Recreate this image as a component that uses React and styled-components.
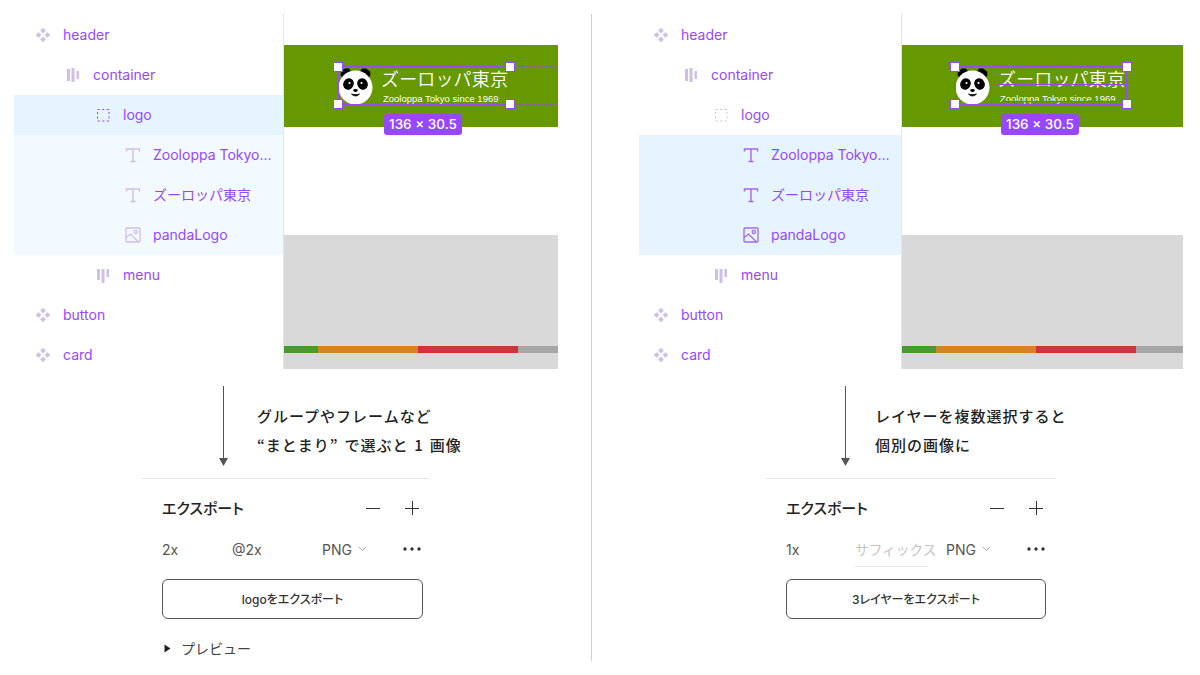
import React from 'react';
import styled, { createGlobalStyle } from 'styled-components';

const PURPLE = '#9747ff';
const ICON_MUTED = '#cfbfe8';
const UI_FONT = 'Inter, "Noto Sans CJK JP", sans-serif';

const GlobalStyle = createGlobalStyle`
  html, body {
    margin: 0;
    height: 100%;
    background: #fff;
    overflow: hidden;
  }
  body {
    font-family: ${UI_FONT};
  }
  * {
    box-sizing: border-box;
  }
`;

// Page
const Page = styled.div`
  display: grid;
  grid-template-columns: 591px 1px 1fr;
  width: 1200px;
  height: 675px;
`;

const Divider = styled.div`
  margin-top: 14px;
  height: 647px;
  background: #cfcfcf;
`;

const Section = styled.section`
  display: flex;
  flex-direction: column;
  padding-top: 14px;
  padding-left: ${(p) => p.$left}px;
`;

const Editor = styled.div`
  display: flex;
  height: 355px;
`;

// Layers
const LayerPanel = styled.div`
  width: ${(p) => p.$width}px;
  padding-top: 1px;
  border-right: 1px solid #e6e6e6;
  overflow: hidden;
`;

const Row = styled.div`
  display: flex;
  align-items: center;
  gap: 12px;
  height: 40px;
  padding-left: ${(p) => p.$inset + p.$depth * 30}px;
  background: ${(p) => (p.$tone === 'selected' ? '#e5f4ff' : p.$tone === 'child' ? '#f2f9ff' : 'transparent')};
  color: ${PURPLE};
  font-size: 14px;
  line-height: 20px;
  white-space: nowrap;
`;

const LayerName = styled.span`
  display: block;
  height: 20px;
  overflow: visible;
`;

const IconBox = styled.svg`
  flex: none;
  width: 16px;
  height: 16px;
  color: ${(p) => (p.$strong ? '#a566f5' : ICON_MUTED)};
`;

const ComponentIcon = () => (
  <IconBox viewBox="0 0 16 16">
    <g fill="currentColor">
      <rect x="6" y="1.6" width="4" height="4" transform="rotate(45 8 3.6)" />
      <rect x="6" y="10.4" width="4" height="4" transform="rotate(45 8 12.4)" />
      <rect x="1.6" y="6" width="4" height="4" transform="rotate(45 3.6 8)" />
      <rect x="10.4" y="6" width="4" height="4" transform="rotate(45 12.4 8)" />
    </g>
  </IconBox>
);

const RowsIcon = () => (
  <IconBox viewBox="0 0 16 16">
    <g fill="currentColor">
      <rect x="2" y="2" width="3" height="12" />
      <rect x="6.5" y="1" width="3" height="14" />
      <rect x="11.5" y="4" width="2.5" height="8" />
    </g>
  </IconBox>
);

const TopBarsIcon = () => (
  <IconBox viewBox="0 0 16 16">
    <g fill="currentColor">
      <rect x="2" y="2" width="3" height="11" />
      <rect x="6.5" y="2" width="3" height="14" />
      <rect x="11.5" y="2" width="2.5" height="8" />
    </g>
  </IconBox>
);

const FrameIcon = ({ strong }) => (
  <IconBox viewBox="0 0 16 16" style={strong ? { color: PURPLE } : undefined}>
    <rect x="2.5" y="2.5" width="11.5" height="11.5" fill="none" stroke="currentColor" strokeDasharray="2.2 2.4" />
  </IconBox>
);

const TextIcon = ({ strong }) => (
  <IconBox viewBox="0 0 16 16" $strong={strong}>
    <path d="M1.5 4.5V2h13v2.5M8 2v12M5.5 14.5h5" fill="none" stroke="currentColor" strokeWidth="1.4" />
  </IconBox>
);

const ImageIcon = ({ strong }) => (
  <IconBox viewBox="0 0 16 16" $strong={strong}>
    <g fill="none" stroke="currentColor" strokeWidth="1.3">
      <rect x="1" y="1" width="14" height="14" rx="1" />
      <path d="M1 10.5l4.5-3.5 8 8" />
      <circle cx="10.8" cy="5" r="1.6" />
    </g>
  </IconBox>
);

const layerRows = [
  { name: 'header', depth: 0, Icon: ComponentIcon },
  { name: 'container', depth: 1, Icon: RowsIcon },
  { name: 'logo', depth: 2, Icon: FrameIcon, group: true },
  { name: 'Zooloppa Tokyo...', depth: 3, Icon: TextIcon, child: true },
  { name: 'ズーロッパ東京', depth: 3, Icon: TextIcon, child: true },
  { name: 'pandaLogo', depth: 3, Icon: ImageIcon, child: true },
  { name: 'menu', depth: 2, Icon: TopBarsIcon },
  { name: 'button', depth: 0, Icon: ComponentIcon },
  { name: 'card', depth: 0, Icon: ComponentIcon },
];

const Layers = ({ mode, width, inset }) => (
  <LayerPanel $width={width}>
    {layerRows.map(({ name, depth, Icon, group, child }) => {
      let tone;
      if (mode === 'group') tone = group ? 'selected' : child ? 'child' : undefined;
      if (mode === 'multi') tone = child ? 'selected' : undefined;
      const strong = (mode === 'group' && group) || (mode === 'multi' && child);
      return (
        <Row key={name} $depth={depth} $inset={inset} $tone={tone}>
          <Icon strong={strong} />
          <LayerName>{name}</LayerName>
        </Row>
      );
    })}
  </LayerPanel>
);

// Design preview
const Preview = styled.div`
  display: flex;
  flex-direction: column;
  width: ${(p) => p.$width}px;
  padding-top: 31px;
  overflow: hidden;
`;

const Band = styled.div`
  flex: none;
  height: 82px;
  padding-top: 21px;
  padding-left: ${(p) => p.$left}px;
  background: #669900;
`;

const WhiteGap = styled.div`
  flex: none;
  height: 108px;
`;

const GreyBlock = styled.div`
  display: flex;
  flex: 1;
  align-items: flex-end;
  padding-bottom: 16px;
  background: #d9d9d9;
`;

const Stripe = styled.div`
  flex: ${(p) => (p.$width ? `0 0 ${p.$width}px` : '1')};
  height: 7px;
  background: ${(p) => p.$color};
`;

const Logo = styled.div`
  position: relative;
  display: flex;
  gap: 6px;
  width: 172px;
  height: 39px;
`;

const LogoText = styled.div`
  display: flex;
  flex-direction: column;
  color: #fff;
  white-space: nowrap;
`;

const LogoTitle = styled.div`
  height: 25px;
  font-family: "Noto Sans CJK JP", sans-serif;
  font-size: 18px;
  font-weight: 350;
  line-height: 25px;
  letter-spacing: 0.15px;
`;

const LogoSub = styled.div`
  margin: 2px 0 0 2px;
  font-family: "Liberation Sans", sans-serif;
  font-size: 9.5px;
  line-height: 12px;
`;

const Outline = styled.div`
  position: absolute;
  inset: 0;
  border: 1px solid ${PURPLE};
`;

const Handle = styled.span`
  position: absolute;
  top: ${(p) => (p.$bottom ? 'auto' : '-4px')};
  bottom: ${(p) => (p.$bottom ? '-4px' : 'auto')};
  left: ${(p) => (p.$right ? 'auto' : '-5px')};
  right: ${(p) => (p.$right ? '-5px' : 'auto')};
  width: 10px;
  height: 10px;
  background: #fff;
  border: 1px solid ${PURPLE};
`;

const DottedGuide = styled.span`
  position: absolute;
  left: 172px;
  top: ${(p) => p.$top}px;
  width: 60px;
  height: 1px;
  background: repeating-linear-gradient(90deg, ${PURPLE} 0 2px, transparent 2px 4px);
`;

const ChildBox = styled.span`
  position: absolute;
  top: 0;
  left: 0;
  width: 37px;
  height: 39px;
  border-right: 1px solid ${PURPLE};
`;

const Underline = styled.span`
  position: absolute;
  left: ${(p) => p.$left}px;
  top: ${(p) => p.$top}px;
  width: ${(p) => p.$width}px;
  border-top: 1px solid ${PURPLE};
`;

const SizeTag = styled.div`
  position: absolute;
  top: 48px;
  left: 46px;
  width: 78px;
  height: 21px;
  border-radius: 3px;
  background: ${PURPLE};
  color: #fff;
  font-size: 13.5px;
  font-weight: 500;
  line-height: 21px;
  text-align: center;
  white-space: nowrap;
`;

const Panda = () => (
  <svg width="37" height="39" viewBox="0 0 37 39" style={{ flex: 'none' }}>
    <path d="M3 5.5L7 2.5h4l2 3-7.5 8L2.5 9zM32 5.5L28 2.5h-4l-2 3 7.5 8L32.5 9z" fill="#000" />
    <circle cx="17.5" cy="21.5" r="17" fill="#fff" />
    <ellipse cx="10.5" cy="18" rx="5.2" ry="5.8" transform="rotate(30 10.5 18)" fill="#000" />
    <ellipse cx="24.5" cy="18" rx="5.2" ry="5.8" transform="rotate(-30 24.5 18)" fill="#000" />
    <circle cx="11.5" cy="17" r="1.1" fill="#fff" />
    <circle cx="23.5" cy="17" r="1.1" fill="#fff" />
    <ellipse cx="17.5" cy="24.5" rx="2.3" ry="1.4" fill="#000" />
    <path d="M13.5 28c2.4 2.6 5.6 2.6 8 0-2.6.7-5.4.7-8 0z" fill="#000" stroke="#000" strokeWidth="0.8" />
  </svg>
);

const Design = ({ mode, width, left }) => (
  <Preview $width={width}>
    <Band $left={left}>
      <Logo>
        <Panda />
        <LogoText>
          <LogoTitle>ズーロッパ東京</LogoTitle>
          <LogoSub>Zooloppa Tokyo since 1969</LogoSub>
        </LogoText>
        <Outline />
        {mode === 'group' && <DottedGuide $top={0} />}
        {mode === 'group' && <DottedGuide $top={38} />}
        {mode === 'multi' && <ChildBox />}
        {mode === 'multi' && <Underline $left={43} $top={18} $width={129} />}
        {mode === 'multi' && <Underline $left={46} $top={35} $width={115} />}
        <Handle />
        <Handle $right />
        <Handle $bottom />
        <Handle $bottom $right />
        <SizeTag>136 × 30.5</SizeTag>
      </Logo>
    </Band>
    <WhiteGap />
    <GreyBlock>
      <Stripe $width={34} $color="#479a2f" />
      <Stripe $width={100} $color="#d08520" />
      <Stripe $width={100} $color="#d13438" />
      <Stripe $color="#a6a6a6" />
    </GreyBlock>
  </Preview>
);

// Note with arrow
const NoteRow = styled.div`
  display: flex;
  flex: none;
  height: 80px;
  margin-top: 17px;
  padding-left: ${(p) => p.$left}px;
`;

const NoteText = styled.div`
  margin-left: ${(p) => p.$gap}px;
  padding-top: 15px;
  color: #222;
  font-family: "Noto Sans CJK JP", sans-serif;
  font-size: 15px;
  font-weight: 500;
  line-height: 29px;
  letter-spacing: 1px;
  word-spacing: 1.5px;
  white-space: nowrap;
`;

const Arrow = () => (
  <svg width="11" height="80" viewBox="0 0 11 80" style={{ flex: 'none' }}>
    <path d="M5.5 0v74" stroke="#555" strokeWidth="1" fill="none" />
    <path d="M1 72h9l-4.5 8z" fill="#555" />
  </svg>
);

// Export panel
const ExportPanel = styled.div`
  flex: none;
  width: ${(p) => p.$width}px;
  margin-top: 12px;
  margin-left: ${(p) => p.$left}px;
  padding: 19px 0 0 20px;
  border-top: 1px solid #e6e6e6;
`;

const ExportInner = styled.div`
  width: ${(p) => p.$width}px;
`;

const TitleRow = styled.div`
  display: flex;
  align-items: center;
  justify-content: space-between;
  width: 258px;
  height: 20px;
`;

const Title = styled.div`
  margin-bottom: 2px;
  color: #222;
  font-size: 15px;
  font-weight: 500;
  font-feature-settings: "palt";
`;

const TitleActions = styled.div`
  display: flex;
  gap: 23px;
`;

const SettingsRow = styled.div`
  display: grid;
  grid-template-columns: ${(p) => p.$first}px ${(p) => p.$second}px 1fr auto;
  align-items: center;
  width: 258px;
  height: 20px;
  margin-top: 21px;
  color: #555;
  font-size: 14px;
  white-space: nowrap;
`;

const Suffix = styled.div`
  position: relative;
  color: #c4c4c4;
  font-size: 13.7px;

  &::after {
    content: '';
    position: absolute;
    left: 0;
    bottom: -8px;
    width: 73px;
    border-bottom: 1px solid #e6e6e6;
  }
`;

const FormatSelect = styled.div`
  display: flex;
  align-items: center;
  gap: 6px;
`;

const ExportButton = styled.div`
  display: flex;
  align-items: center;
  justify-content: center;
  height: 40px;
  margin-top: 20px;
  padding-bottom: 2px;
  border: 1px solid #555;
  border-radius: 6px;
  color: #333;
  font-size: 12px;
  font-weight: 500;
  font-feature-settings: "palt";
`;

const PreviewToggle = styled.div`
  display: flex;
  align-items: center;
  gap: 9px;
  height: 20px;
  margin-top: 19px;
  color: #444;
  font-size: 14px;
`;

const MinusIcon = () => (
  <svg width="16" height="16" viewBox="0 0 16 16">
    <path d="M1 8.5h14" stroke="#333" strokeWidth="1" />
  </svg>
);

const PlusIcon = () => (
  <svg width="16" height="16" viewBox="0 0 16 16">
    <path d="M1 8.5h14M8.5 1v14" stroke="#333" strokeWidth="1" />
  </svg>
);

const DotsIcon = () => (
  <svg width="18" height="4" viewBox="0 0 18 4" style={{ marginRight: -1 }}>
    <g fill="#333">
      <circle cx="2" cy="2" r="1.7" />
      <circle cx="9" cy="2" r="1.7" />
      <circle cx="16" cy="2" r="1.7" />
    </g>
  </svg>
);

const ChevronIcon = () => (
  <svg width="9" height="6" viewBox="0 0 9 6">
    <path d="M1 1l3.5 3.5L8 1" fill="none" stroke="#aaa" strokeWidth="1" />
  </svg>
);

const CaretIcon = () => (
  <svg width="8" height="9" viewBox="0 0 8 9" style={{ marginLeft: 2 }}>
    <path d="M0.5 0.5L6.5 4.5L0.5 8.5z" fill="#222" />
  </svg>
);

const App = () => (
  <Page>
    <GlobalStyle />
    <Section $left={14}>
      <Editor>
        <Layers mode="group" width={270} inset={21} />
        <Design mode="group" width={274} left={54} />
      </Editor>
      <NoteRow $left={204}>
        <Arrow />
        <NoteText $gap={28}>
          グループやフレームなど
          <br />
          “まとまり” で選ぶと 1 画像
        </NoteText>
      </NoteRow>
      <ExportPanel $left={128} $width={287}>
        <ExportInner $width={261}>
          <TitleRow>
            <Title>エクスポート</Title>
            <TitleActions>
              <MinusIcon />
              <PlusIcon />
            </TitleActions>
          </TitleRow>
          <SettingsRow $first={70} $second={90}>
            <div>2x</div>
            <div>@2x</div>
            <FormatSelect>
              PNG <ChevronIcon />
            </FormatSelect>
            <DotsIcon />
          </SettingsRow>
          <ExportButton>logoをエクスポート</ExportButton>
          <PreviewToggle>
            <CaretIcon />
            プレビュー
          </PreviewToggle>
        </ExportInner>
      </ExportPanel>
    </Section>
    <Divider />
    <Section $left={47}>
      <Editor>
        <Layers mode="multi" width={263} inset={14} />
        <Design mode="multi" width={281} left={53} />
      </Editor>
      <NoteRow $left={201}>
        <Arrow />
        <NoteText $gap={24}>
          レイヤーを複数選択すると
          <br />
          個別の画像に
        </NoteText>
      </NoteRow>
      <ExportPanel $left={127} $width={290}>
        <ExportInner $width={260}>
          <TitleRow>
            <Title>エクスポート</Title>
            <TitleActions>
              <MinusIcon />
              <PlusIcon />
            </TitleActions>
          </TitleRow>
          <SettingsRow $first={69} $second={91}>
            <div>1x</div>
            <Suffix>サフィックス</Suffix>
            <FormatSelect>
              PNG <ChevronIcon />
            </FormatSelect>
            <DotsIcon />
          </SettingsRow>
          <ExportButton>3レイヤーをエクスポート</ExportButton>
        </ExportInner>
      </ExportPanel>
    </Section>
  </Page>
);

export default App;
